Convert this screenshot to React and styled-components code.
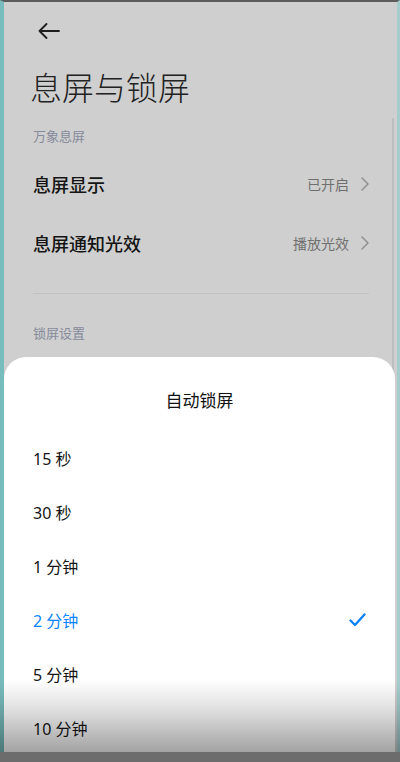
import React from 'react';
import styled, { createGlobalStyle } from 'styled-components';

const GlobalStyle = createGlobalStyle`
  html, body {
    margin: 0;
    padding: 0;
    background: #cfcfcf;
  }
  body {
    font-family: "Noto Sans", "Noto Sans CJK SC", sans-serif;
  }
`;

const Wrapper = styled.div`
  position: relative;
  width: 400px;
  height: 762px;
  overflow: hidden;
`;

const Frame = styled.div`
  position: relative;
  box-sizing: border-box;
  height: 100%;
  border-top: 2px solid #5c5c5c;
  border-left: 4px solid #78bcbd;
  border-right: 3px solid #a6cdce;
  background: #cfcfcf;
  padding: 0 28px 0 29px;
`;

const Header = styled.div`
  height: 58px;
  display: flex;
  align-items: center;
  padding-left: 5px;
`;

const Title = styled.h1`
  margin: 4px 0 0 -3px;
  font-family: "Noto Sans CJK SC", sans-serif;
  font-size: 32px;
  font-weight: 300;
  line-height: 44px;
  color: #222;
`;

const SectionLabel = styled.div`
  margin-top: ${({ $top }) => $top}px;
  font-family: "Noto Sans CJK SC", sans-serif;
  font-size: 13px;
  line-height: 20px;
  color: #868b9b;
`;

const List = styled.div`
  margin-top: 8px;
`;

const Row = styled.div`
  height: 59px;
  display: flex;
  align-items: center;
  justify-content: space-between;
`;

const RowLabel = styled.span`
  font-family: "Noto Sans CJK SC", sans-serif;
  font-size: 18px;
  font-weight: 500;
  color: #141414;
`;

const RowValue = styled.span`
  display: flex;
  align-items: center;
  gap: 12px;
  font-family: "Noto Sans CJK SC", sans-serif;
  font-size: 14px;
  color: #6f6f6f;
`;

const Divider = styled.div`
  margin-top: 21px;
  height: 1px;
  background: #c2c2c2;
`;

const Scrollbar = styled.div`
  position: absolute;
  top: 116px;
  right: 3px;
  width: 2px;
  height: 260px;
  border-radius: 1px;
  background: #bdbdbd;
`;

const Sheet = styled.div`
  position: absolute;
  top: 355px;
  left: 0;
  right: 2px;
  bottom: 0;
  background: #ffffff;
  border-radius: 22px 22px 0 0;
`;

const SheetTitle = styled.div`
  padding: 34px 0 22px;
  text-align: center;
  font-family: "Noto Sans CJK SC", sans-serif;
  font-size: 17px;
  line-height: 18px;
  color: #111;
`;

const Option = styled.div`
  height: 54px;
  display: flex;
  align-items: center;
  justify-content: space-between;
  padding: 0 29px;
  font-family: "Noto Sans", "Noto Sans CJK SC", sans-serif;
  font-size: 16px;
  color: ${({ $active }) => ($active ? '#0d84ff' : '#151515')};
`;

const BottomShade = styled.div`
  position: absolute;
  left: 0;
  right: 0;
  top: 680px;
  height: 72px;
  background: linear-gradient(
    to bottom,
    rgba(0, 0, 0, 0) 0%,
    rgba(0, 0, 0, 0.12) 40%,
    rgba(0, 0, 0, 0.36) 100%
  );
  pointer-events: none;
`;

const NavBar = styled.div`
  position: absolute;
  left: 0;
  right: 0;
  bottom: 0;
  height: 10px;
  background: #6c6c6c;
`;

const BackArrow = () => (
  <svg width="22" height="16" viewBox="0 0 22 16" fill="none">
    <path
      d="M21 8H1.5M8.5 1L1.5 8l7 7"
      stroke="#1d1d1d"
      strokeWidth="1.8"
      strokeLinecap="round"
      strokeLinejoin="round"
    />
  </svg>
);

const Chevron = () => (
  <svg width="8" height="14" viewBox="0 0 8 14" fill="none">
    <path d="M1 1l6 6-6 6" stroke="#8c8c8c" strokeWidth="1.4" strokeLinecap="round" strokeLinejoin="round" />
  </svg>
);

const Check = () => (
  <svg width="17" height="14" viewBox="0 0 17 14" fill="none">
    <path d="M1.5 7.5l4.5 4.5L15.5 1.5" stroke="#0d84ff" strokeWidth="2.4" strokeLinecap="round" strokeLinejoin="round" />
  </svg>
);

const options = ['15 秒', '30 秒', '1 分钟', '2 分钟', '5 分钟', '10 分钟'];

export default function App() {
  return (
    <>
      <GlobalStyle />
      <Wrapper>
        <Frame>
          <Header>
            <BackArrow />
          </Header>
          <Title>息屏与锁屏</Title>
          <SectionLabel $top={18}>万象息屏</SectionLabel>
          <List>
            <Row>
              <RowLabel>息屏显示</RowLabel>
              <RowValue>
                已开启
                <Chevron />
              </RowValue>
            </Row>
            <Row>
              <RowLabel>息屏通知光效</RowLabel>
              <RowValue>
                播放光效
                <Chevron />
              </RowValue>
            </Row>
          </List>
          <Divider />
          <SectionLabel $top={29}>锁屏设置</SectionLabel>
          <Scrollbar />
          <Sheet>
            <SheetTitle>自动锁屏</SheetTitle>
            {options.map((o) => (
              <Option key={o} $active={o === '2 分钟'}>
                {o}
                {o === '2 分钟' && <Check />}
              </Option>
            ))}
          </Sheet>
        </Frame>
        <BottomShade />
        <NavBar />
      </Wrapper>
    </>
  );
}
